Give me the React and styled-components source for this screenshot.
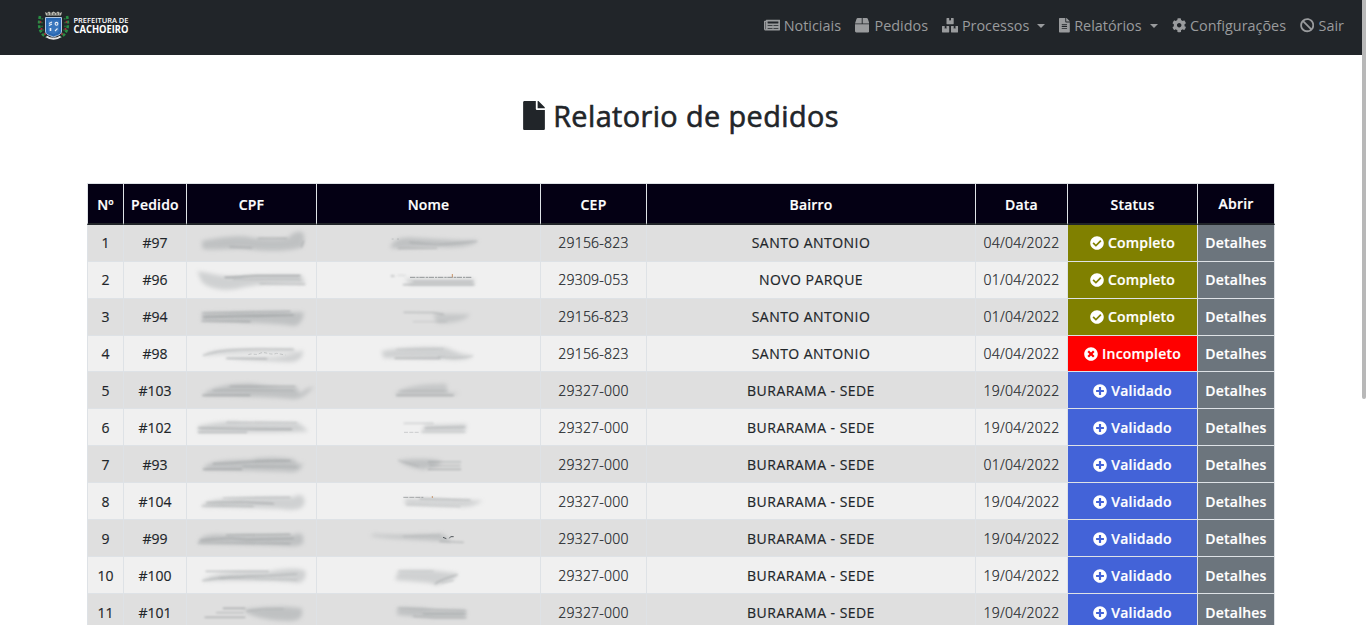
import React from 'react';
import styled, { createGlobalStyle, css } from 'styled-components';
import {
  FaNewspaper, FaBox, FaBoxes, FaFileAlt, FaCog, FaBan, FaFile,
  FaCheckCircle, FaTimesCircle, FaPlusCircle,
} from 'react-icons/fa';

const GlobalStyle = createGlobalStyle`
  *, *::before, *::after { box-sizing: border-box; }
  html, body { margin: 0; height: 625px; overflow: hidden; background: #fff; }
  body { font-family: 'Open Sans', 'Noto Sans', sans-serif; color: #212529; }
`;

const Viewport = styled.div`
  display: flex;
  height: 625px;
  overflow: hidden;
`;

const Page = styled.div`
  flex: 1;
  min-width: 0;
`;

const ScrollTrack = styled.div`
  width: 4px;
  background: #fff;
`;

const ScrollThumb = styled.div`
  height: 399px;
  background: #b8b8b8;
  border-radius: 0 0 2px 2px;
`;

const Navbar = styled.header`
  display: flex;
  align-items: center;
  justify-content: space-between;
  height: 55px;
  padding: 0 18px 4px 37px;
  background: #212529;
`;

const Nav = styled.nav`
  display: flex;
  gap: 14px;
`;

const NavLink = styled.a`
  display: flex;
  align-items: center;
  justify-content: space-between;
  width: ${(p) => p.$width}px;
  height: 22px;
  font-size: 14.4px;
  white-space: nowrap;
  color: #999b9d;
  svg {
    width: ${(p) => p.$icon}px;
    height: 14.4px;
    flex: none;
  }
`;

const Caret = styled.span`
  border: 4.3px solid transparent;
  border-top-color: currentColor;
  border-bottom: 0;
  margin-left: 4px;
`;

const Title = styled.h1`
  display: flex;
  align-items: center;
  justify-content: center;
  gap: 8px;
  height: 40px;
  margin: 40px 0 48px;
  font-size: 28.8px;
  font-weight: 400;
  letter-spacing: 0.42px;
  -webkit-text-stroke: 0.6px currentColor;
  svg { width: 22px; height: 29px; stroke-width: 0; }
`;

const Table = styled.table`
  table-layout: fixed;
  width: 1188px;
  margin: 0 auto;
  border-collapse: separate;
  border-spacing: 0;
  font-size: 14px;
`;

const HeadCell = styled.th`
  height: 42px;
  padding: ${(p) => (p.$raised ? 0 : 2)}px 0 0;
  border: solid #dee2e6;
  border-width: 1px 1px 2px 0;
  border-bottom-color: #212529;
  background: #040014;
  color: #fff;
  font-weight: 600;
  letter-spacing: 0.2px;
  -webkit-text-stroke: 0.2px currentColor;
  text-align: center;
  &:first-child { border-left-width: 1px; }
`;

const Row = styled.tr`
  background: ${(p) => (p.$odd ? '#dfdfdf' : '#f0f0f0')};
`;

const cellKinds = {
  light: css`font-weight: 300; letter-spacing: 0.24px; -webkit-text-stroke: 0.22px currentColor;`,
  medium: css`font-weight: 400; -webkit-text-stroke: 0.16px currentColor;`,
  area: css`font-weight: 400; letter-spacing: 0.46px; -webkit-text-stroke: 0.18px currentColor;`,
  strong: css`font-weight: 600; letter-spacing: 0.2px; -webkit-text-stroke: 0.2px currentColor;`,
};

const Cell = styled.td`
  height: ${(p) => (p.$short ? 36 : 37)}px;
  padding: ${(p) => (p.$low ? 2 : 0)}px 0 0;
  border: solid #dee2e6;
  border-width: 0 1px 1px 0;
  text-align: center;
  line-height: ${(p) => (p.$short ? 21 : 20)}px;
  white-space: nowrap;
  &:first-child { border-left-width: 1px; }
  ${(p) => cellKinds[p.$kind]}
  ${(p) => p.$fill && css`
    background: ${p.$fill};
    color: #fff;
  `}
`;

const StatusLabel = styled.span`
  display: flex;
  align-items: center;
  justify-content: center;
  gap: 4px;
  svg { width: 14px; height: 14px; stroke-width: 0; }
`;

const SmudgeSvg = styled.svg`
  display: block;
  width: ${(p) => p.$width}px;
  height: 34px;
`;

const Haze = styled.path`
  fill: #a3a7a9;
  opacity: ${(p) => (p.$faint ? 0.42 : 0.52)};
  filter: blur(7px);
`;

const Streak = styled.path`
  fill: none;
  stroke: ${(p) => p.$color || '#757a7c'};
  stroke-width: ${(p) => (p.$dash ? 3 : 3.6)};
  stroke-dasharray: ${(p) => p.$dash || 'none'};
  stroke-linecap: ${(p) => (p.$dash ? 'butt' : 'round')};
  opacity: ${(p) => (p.$o || 0.6) * 0.75};
  filter: blur(${(p) => (p.$dash ? 1.4 : 2.8)}px);
`;

const LogoSvg = styled.svg`
  display: block;
  width: 94px;
  height: 34px;
  overflow: visible;
`;

// Every smudge: a soft body, then the thin streaks over it (3 units per pixel).
const cpfSmudges = [
  { body: 'M65 48C110 38 180 28 215 38C260 42 300 42 325 38C340 18 370 15 372 30C374 50 368 70 362 68C330 78 260 80 220 74C160 66 100 78 68 72Z',
    lines: [['M150 66L215 69'], ['M235 40H320', 0.5], ['M371 48L364 66', 0.5]] },
  { body: 'M52 28C80 30 110 40 140 43C230 40 300 38 365 40L376 66C300 64 240 64 190 76C150 90 90 84 65 60Z', faint: 1,
    lines: [['M135 46C180 46 210 40 240 41H360', 0.9], ['M240 65L375 67', 0.5], ['M160 52H360', 0.3]] },
  { body: 'M66 42C130 40 300 36 372 40C368 70 355 84 335 80C300 74 200 70 66 66Z',
    lines: [['M68 42L180 40L330 37', 0.6], ['M66 66L210 68', 0.7], ['M70 54L180 51L340 48', 0.8]] },
  { body: 'M70 60C90 40 140 38 340 40L350 48C240 50 150 50 70 60ZM130 66C200 60 300 76 368 42C372 68 350 80 320 78C260 76 200 72 130 66Z', faint: 1,
    lines: [['M70 58C120 38 200 38 340 40', 0.5], ['M140 67L260 68', 0.7], ['M205 56C220 50 225 60 240 52S270 60 290 52L316 57', 0.4, '10 6']] },
  { body: 'M68 68C90 38 170 30 220 32C280 42 320 42 350 42L360 62C380 44 390 44 403 42C380 60 370 80 335 78C280 72 200 70 68 68Z',
    lines: [['M68 67L210 67', 0.7], ['M150 40H345', 0.5], ['M100 52H340', 0.3]] },
  { body: 'M55 48C120 35 160 33 180 36L355 38C370 50 385 62 385 64C340 70 200 66 55 68Z', faint: 1,
    lines: [['M55 54L190 57L335 58', 0.7], ['M55 67L200 67', 0.6], ['M140 37L350 38', 0.4]] },
  { body: 'M70 65C80 45 120 38 210 38C240 28 320 30 345 38C350 50 365 60 368 42C370 68 350 80 320 74L70 68Z',
    lines: [['M70 67H185', 0.7], ['M100 50C160 50 210 40 330 41', 0.6], ['M190 58L350 60', 0.35]] },
  { body: 'M66 66C80 45 130 40 340 40C360 25 375 35 374 55C370 80 340 80 300 74L66 68Z', faint: 1,
    lines: [['M66 66L130 65L220 67', 0.5], ['M130 42L330 40', 0.5], ['M80 56L180 54L280 59', 0.6]] },
  { body: 'M55 66C60 40 90 38 150 42L340 42C372 30 370 45 370 66C360 78 330 76 300 74L55 68Z',
    lines: [['M60 58L150 51L200 56L340 52', 0.5], ['M55 66L150 66L330 68', 0.5], ['M140 42L330 40', 0.7]] },
  { body: 'M68 68C90 50 130 40 260 42C320 30 350 30 376 38C380 60 370 76 350 74C300 66 120 66 68 70Z', faint: 1,
    lines: [['M78 40H265', 0.6], ['M68 68C150 50 230 58 350 48', 0.5], ['M120 60L350 66', 0.35]] },
  { body: 'M195 44C240 34 330 32 365 40C370 60 365 78 330 78C280 78 230 70 195 52Z',
    lines: [['M130 40H195', 0.8], ['M75 67H195', 0.7], ['M110 53H190', 0.5], ['M200 48L250 42H310', 0.4]] },
];

const nameSmudges = [
  { body: 'M60 68C70 45 90 36 130 38C200 42 260 46 325 46C310 66 250 70 200 66C150 66 90 74 60 68Z',
    lines: [['M120 52L200 60L320 49', 0.4], ['M85 70H200', 0.5], ['M65 42H92', 0.4, '6 10']] },
  { body: 'M105 50H312V68H120Z', faint: 1,
    lines: [['M64 42H72', 0.9], ['M84 40H106', 0.25], ['M120 46H304', 1, '16 3 7 2'], ['M130 59H310', 0.45], ['M100 68H312', 0.7], ['M247 36V46', 1, '20', '#b8733a']] },
  { body: 'M190 44L300 46C290 66 240 76 200 72Z', faint: 1,
    lines: [['M102 40L190 41L220 46', 0.5], ['M130 68H230', 0.25]] },
  { body: 'M35 45C100 34 180 30 230 35C260 50 290 58 310 58C300 72 260 74 230 70L40 66Z', faint: 1,
    lines: [['M75 67H210', 0.65], ['M205 62C250 70 280 66 308 60', 0.35], ['M80 40L220 38', 0.3]] },
  { body: 'M75 62C100 40 150 32 230 32L232 58L270 60L245 68H80Z', faint: 1,
    lines: [['M80 67H250', 0.65], ['M90 54H230', 0.35]] },
  { body: 'M165 46L290 42L285 66L155 66Z', faint: 1,
    lines: [['M102 40H190', 0.4], ['M102 67H150', 0.4, '12 4'], ['M165 54L285 51', 0.5], ['M155 66H285', 0.45]] },
  { body: 'M85 40C130 34 200 34 215 44L205 54L160 68C130 64 100 54 85 40Z',
    lines: [['M175 45H272', 0.7], ['M180 56H270', 0.55], ['M175 67H272', 0.7], ['M85 40L145 58', 0.3]] },
  { body: 'M105 44L340 50C320 60 300 70 280 68L105 62Z', faint: 1,
    lines: [['M100 40H160', 0.8, '15 3'], ['M150 44L300 48', 0.7], ['M110 62L270 68', 0.35], ['M187 36V42', 0.9, '20', '#b8733a']] },
  { body: 'M5 40C80 45 150 40 215 38C235 50 245 58 240 62C180 56 80 56 5 45Z',
    lines: [['M219 49L229 53M238 52L242 47H251', 1.2, '20', '#42484c'], ['M210 61L280 64', 0.55], ['M100 46L210 42', 0.3]] },
  { body: 'M85 38C150 36 190 36 210 40L262 46C260 66 240 66 200 82C180 70 120 72 75 66Z', faint: 1,
    lines: [['M85 39H190', 0.35], ['M195 78C220 60 240 60 262 50', 0.5], ['M215 75L250 67', 0.45]] },
  { body: 'M82 38C130 36 160 38 190 44L288 46L286 68L190 68L82 60Z',
    lines: [['M85 39L180 43L288 47', 0.45], ['M160 57H288', 0.55], ['M130 64L190 68H288', 0.5]] },
];

const rows = [
  ['1', '#97', '29156-823', 'SANTO ANTONIO', '04/04/2022', 'completo'],
  ['2', '#96', '29309-053', 'NOVO PARQUE', '01/04/2022', 'completo'],
  ['3', '#94', '29156-823', 'SANTO ANTONIO', '01/04/2022', 'completo'],
  ['4', '#98', '29156-823', 'SANTO ANTONIO', '04/04/2022', 'incompleto'],
  ['5', '#103', '29327-000', 'BURARAMA - SEDE', '19/04/2022', 'validado'],
  ['6', '#102', '29327-000', 'BURARAMA - SEDE', '19/04/2022', 'validado'],
  ['7', '#93', '29327-000', 'BURARAMA - SEDE', '01/04/2022', 'validado'],
  ['8', '#104', '29327-000', 'BURARAMA - SEDE', '19/04/2022', 'validado'],
  ['9', '#99', '29327-000', 'BURARAMA - SEDE', '19/04/2022', 'validado'],
  ['10', '#100', '29327-000', 'BURARAMA - SEDE', '19/04/2022', 'validado'],
  ['11', '#101', '29327-000', 'BURARAMA - SEDE', '19/04/2022', 'validado'],
];

const statuses = {
  completo: { label: 'Completo', color: '#808000', Icon: FaCheckCircle },
  incompleto: { label: 'Incompleto', color: '#ff0000', Icon: FaTimesCircle },
  validado: { label: 'Validado', color: '#4363d8', Icon: FaPlusCircle },
};

const navItems = [
  { label: 'Noticiais', Icon: FaNewspaper, icon: 16.2, width: 77 },
  { label: 'Pedidos', Icon: FaBox, icon: 14.4, width: 73 },
  { label: 'Processos', Icon: FaBoxes, icon: 16.2, width: 103, menu: true },
  { label: 'Relatórios', Icon: FaFileAlt, icon: 10.8, width: 99, menu: true },
  { label: 'Configurações', Icon: FaCog, icon: 14.4, width: 114 },
  { label: 'Sair', Icon: FaBan, icon: 14.4, width: 44 },
];

const columns = [
  ['Nº', 37], ['Pedido', 63], ['CPF', 130], ['Nome', 224], ['CEP', 106],
  ['Bairro', 329], ['Data', 92], ['Status', 130], ['Abrir', 77],
];

function Smudge({ data, x, width }) {
  return (
    <SmudgeSvg $width={width} viewBox={`${x} 3 ${width * 3} 102`} aria-hidden="true">
      <Haze d={data.body} $faint={data.faint} />
      {data.lines.map(([d, o, dash, color], i) => (
        <Streak key={i} d={d} $o={o} $dash={dash} $color={color} />
      ))}
    </SmudgeSvg>
  );
}

function Logo() {
  return (
    <LogoSvg viewBox="0 0 94 34">
      <g fill="none" stroke="#2a8f44" strokeWidth="2.6" strokeDasharray="3 1.6">
        <path d="M3 7C1 16 2 24 9 28" />
        <path d="M30 7C32 16 31 24 24 28" />
      </g>
      <g fill="none" stroke="#1f6b36" strokeWidth="1.8" strokeDasharray="1.6 2.2">
        <path d="M5.5 9C4 16 5 22 9 25" />
        <path d="M27.5 9C29 16 28 22 24 25" />
      </g>
      <g fill="#a92f3c">
        <circle cx="3.5" cy="13" r="1" /><circle cx="4.5" cy="20" r="1.1" /><circle cx="8" cy="25" r="1" />
        <circle cx="29.5" cy="13" r="1" /><circle cx="28.5" cy="20" r="1.1" /><circle cx="25" cy="25" r="1" />
      </g>
      <path d="M8 3L10 4L12 2.5L14 4L16.5 2.5L19 4L21 2.5L23 4L25 3L24 6.5H9Z" fill="#b9b9b0" />
      <path d="M10 5H23" stroke="#444" strokeWidth="1.2" strokeDasharray="2 1" />
      <path d="M8.5 8.5H24.5V22C24.5 26 20 26.5 16.5 28C13 26.5 8.5 26 8.5 22Z" fill="#2867b2" stroke="#b4c8e0" strokeWidth="1" />
      <path d="M11 11.5H22V21C22 24 19 24 16.5 25.5C14 24 11 24 11 21Z" fill="#3976bd" />
      <g fill="none" stroke="#e9eef5" strokeWidth="1.1">
        <path d="M12 14.5L15 13M12 16.5L15 15M18 22L20.5 19.5" />
        <circle cx="19.5" cy="14.8" r="1.4" />
        <path d="M13.5 19V22" strokeWidth="1.6" />
      </g>
      <path d="M9.5 27.5C13 30.5 20 30.5 23.5 27.5" fill="none" stroke="#e5e5e5" strokeWidth="2" />
      <text x="36.5" y="14" fill="#fff" fontSize="7.4" fontWeight="600" textLength="55" lengthAdjust="spacingAndGlyphs">PREFEITURA DE</text>
      <text x="36.5" y="24.4" fill="#fff" fontSize="10.6" fontWeight="700" textLength="55" lengthAdjust="spacingAndGlyphs">CACHOEIRO</text>
    </LogoSvg>
  );
}

export default function App() {
  return (
    <>
      <GlobalStyle />
      <Viewport>
        <Page>
          <Navbar>
            <Logo />
            <Nav>
              {navItems.map(({ label, Icon, icon, width, menu }) => (
                <NavLink key={label} $width={width} $icon={icon}>
                  <Icon preserveAspectRatio="none" />
                  <span>{label}</span>
                  {menu && <Caret />}
                </NavLink>
              ))}
            </Nav>
          </Navbar>
          <Title><FaFile />Relatorio de pedidos</Title>
          <Table>
            <colgroup>
              {columns.map(([name, width]) => <col key={name} width={width} />)}
            </colgroup>
            <thead>
              <tr>
                {columns.map(([name]) => (
                  <HeadCell key={name} $raised={name === 'Abrir'}>{name}</HeadCell>
                ))}
              </tr>
            </thead>
            <tbody>
              {rows.map(([n, order, cep, area, date, status], i) => {
                const { label, color, Icon } = statuses[status];
                const fit = { $short: i === 3, $low: i > 3 };
                return (
                  <Row key={n} $odd={i % 2 === 0}>
                    <Cell {...fit} $kind="medium">{n}</Cell>
                    <Cell {...fit} $kind="medium">{order}</Cell>
                    <Cell {...fit}><Smudge data={cpfSmudges[i]} x={21} width={129} /></Cell>
                    <Cell {...fit}><Smudge data={nameSmudges[i]} x={-159} width={223} /></Cell>
                    <Cell {...fit} $kind="light">{cep}</Cell>
                    <Cell {...fit} $kind="area">{area}</Cell>
                    <Cell {...fit} $kind="light">{date}</Cell>
                    <Cell {...fit} $kind="strong" $fill={color}>
                      <StatusLabel><Icon />{label}</StatusLabel>
                    </Cell>
                    <Cell {...fit} $kind="strong" $fill="#6c757d">Detalhes</Cell>
                  </Row>
                );
              })}
            </tbody>
          </Table>
        </Page>
        <ScrollTrack><ScrollThumb /></ScrollTrack>
      </Viewport>
    </>
  );
}
